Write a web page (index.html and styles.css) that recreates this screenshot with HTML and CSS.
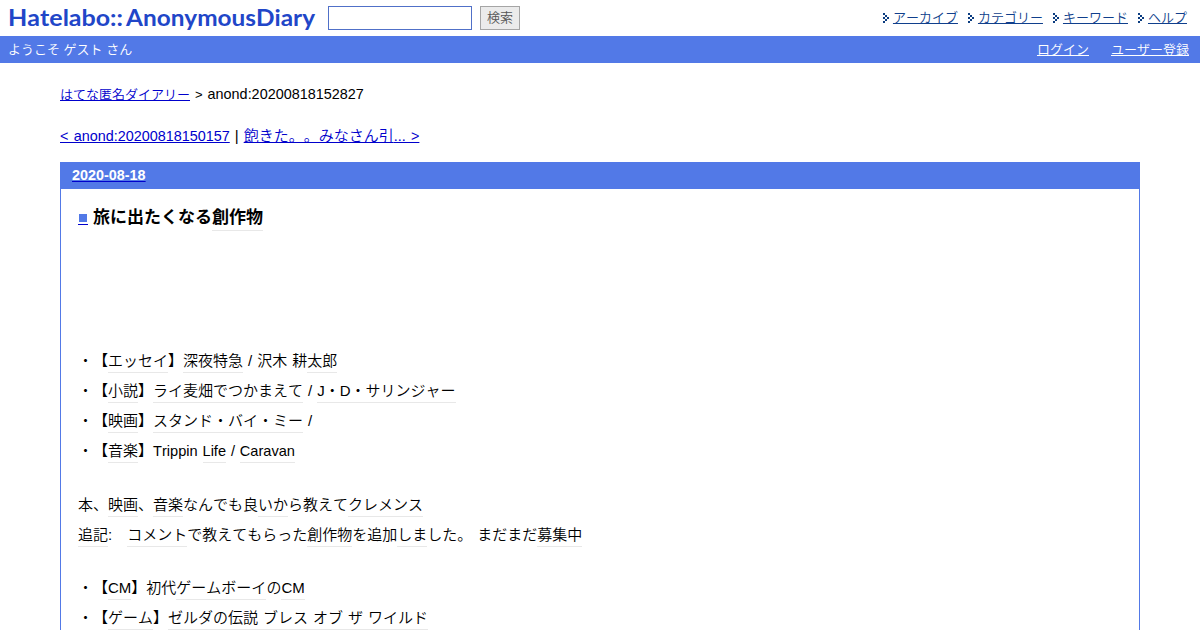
FILE: index.html
```html
<!DOCTYPE html>
<html lang="ja">
<head>
    <meta charset="UTF-8">
    <title>旅に出たくなる創作物</title>
    <link rel="stylesheet" href="styles.css">
</head>
<body>

    <div id="simple-header">
        <a class="logo" href="#">
            <svg width="320" height="36" viewBox="0 0 320 36">
                <text x="8" y="26" textLength="115" lengthAdjust="spacingAndGlyphs">Hatelabo::</text>
                <text x="126" y="26" textLength="189" lengthAdjust="spacingAndGlyphs">AnonymousDiary</text>
            </svg>
        </a>
        <form class="search-form">
            <input type="text" class="search-word">
            <button type="button" class="search-button">検索</button>
        </form>
        <ul class="menu">
            <li><svg class="arrow" width="7" height="10" viewBox="0 0 7 10" shape-rendering="crispEdges"><path d="M0 0h2v2h-2zM2 2h2v2h-2zM4 4h2v2h-2zM2 6h2v2h-2zM0 8h2v2h-2zM0 4h2v2h-2z"/></svg><a href="#">アーカイブ</a></li>
            <li><svg class="arrow" width="7" height="10" viewBox="0 0 7 10" shape-rendering="crispEdges"><path d="M0 0h2v2h-2zM2 2h2v2h-2zM4 4h2v2h-2zM2 6h2v2h-2zM0 8h2v2h-2zM0 4h2v2h-2z"/></svg><a href="#">カテゴリー</a></li>
            <li><svg class="arrow" width="7" height="10" viewBox="0 0 7 10" shape-rendering="crispEdges"><path d="M0 0h2v2h-2zM2 2h2v2h-2zM4 4h2v2h-2zM2 6h2v2h-2zM0 8h2v2h-2zM0 4h2v2h-2z"/></svg><a href="#">キーワード</a></li>
            <li><svg class="arrow" width="7" height="10" viewBox="0 0 7 10" shape-rendering="crispEdges"><path d="M0 0h2v2h-2zM2 2h2v2h-2zM4 4h2v2h-2zM2 6h2v2h-2zM0 8h2v2h-2zM0 4h2v2h-2z"/></svg><a href="#">ヘルプ</a></li>
        </ul>
    </div>

    <div id="banner-sub">
        <span>ようこそ ゲスト さん</span>
        <div class="login">
            <a href="#">ログイン</a>
            <a href="#">ユーザー登録</a>
        </div>
    </div>

    <div id="hatena-body">
        <div class="breadcrumb"><a href="#">はてな匿名ダイアリー</a><span class="gt">&gt;</span><span class="latin">anond:20200818152827</span></div>

        <div class="pager"><a href="#"><span class="latin">&lt; anond:20200818150157</span></a><span class="bar">|</span><a href="#">飽きた。。みなさん引<span class="latin">... &gt;</span></a></div>

        <div class="day">
            <h2><a href="#">2020-08-18</a></h2>
            <div class="section">
                <h3><a class="sanchor" href="#"><span class="square"></span></a>旅に出たくなる<span class="keyword">創作物</span></h3>
                <p class="list">
                    ・【<span class="keyword">エッセイ</span>】<span class="keyword">深夜特急</span> / 沢木 耕<span class="keyword">太郎</span><br>
                    ・【<span class="keyword">小説</span>】<span class="keyword">ライ麦畑でつかまえて</span> / <span class="keyword">J・D・サリンジャー</span><br>
                    ・【<span class="keyword">映画</span>】<span class="keyword">スタンド・バイ・ミー</span> /<br>
                    ・【<span class="keyword">音楽</span>】<span class="latin">Trippin <span class="keyword">Life</span> / <span class="keyword">Caravan</span></span>
                </p>
                <p>
                    本、<span class="keyword">映画</span>、<span class="keyword">音楽</span>なんでも良<span class="keyword">いか</span>ら教えて<span class="keyword">クレメンス</span><br>
                    <span class="keyword">追記</span>:　<span class="keyword">コメント</span>で教えてもらった<span class="keyword">創作物</span>を追加<span class="keyword">しま</span>した。 まだまだ<span class="keyword">募集中</span>
                </p>
                <p>
                    ・【<span class="keyword">CM</span>】初代<span class="keyword">ゲームボーイ</span>の<span class="keyword">CM</span><br>
                    ・【<span class="keyword">ゲーム</span>】<span class="keyword">ゼルダの伝説 ブレス オブ ザ ワイルド</span>
                </p>
            </div>
        </div>
    </div>

</body>
</html>
```
FILE: styles.css
```css
html {
    overflow: hidden;
}

body {
    margin: 0;
    height: 630px;
    overflow: hidden;
    background: #fff;
    color: #000;
    font-family: "Liberation Sans", "Noto Sans CJK JP", sans-serif;
    font-size: 15px;
    font-weight: 350;
    font-kerning: none;
    text-spacing-trim: space-all;
    text-decoration-skip-ink: none;
}

a {
    color: #0000cc;
}

/* ヘッダー */
#simple-header {
    display: flex;
    align-items: center;
    height: 36px;
}

.logo,
.logo svg {
    display: block;
}

.logo text {
    font-family: Lato, sans-serif;
    font-size: 23px;
    font-weight: 700;
    fill: #2146c8;
}

.search-form {
    display: flex;
    gap: 8px;
    margin-left: 8px;
}

.search-word {
    box-sizing: border-box;
    width: 144px;
    height: 24px;
    border: 1px solid #5070c8;
    background: #fff;
}

.search-button {
    width: 40px;
    height: 24px;
    padding: 0;
    border: 1px solid #a5a5a5;
    background: #ebebeb;
    color: #555;
    font: 350 13px/20px "Liberation Sans", "Noto Sans CJK JP", sans-serif;
}

.menu {
    display: flex;
    gap: 10px;
    margin: 0 13px 0 auto;
    padding: 0;
    list-style: none;
    font-size: 13px;
    line-height: 18px;
}

.menu li {
    display: flex;
    align-items: center;
}

.menu a {
    color: #103f8c;
}

.arrow {
    margin-right: 3px;
    fill: #0b3c80;
}

/* ログインバー */
#banner-sub {
    display: flex;
    justify-content: space-between;
    height: 27px;
    padding: 0 11px 0 8px;
    background: #5279e7;
    color: #fff;
    font-size: 13px;
    line-height: 27px;
}

.login {
    display: flex;
    gap: 22px;
}

.login a {
    color: #fff;
}

/* 本文 */
#hatena-body {
    padding: 21px 60px 0;
}

.breadcrumb {
    height: 20px;
    line-height: 20px;
    font-size: 13px;
}

.gt {
    margin: 0 5px;
}

.latin {
    font-size: 14.4px;
}

.pager {
    height: 20px;
    margin-top: 22px;
    line-height: 20px;
    word-spacing: 1.3px;
}

.bar {
    margin: 0 5px;
}

.day {
    margin-top: 16px;
    border: 1px solid #5279e7;
}

.day h2 {
    height: 26px;
    margin: 0;
    padding-left: 11px;
    background: #5279e7;
    font-size: 14.4px;
    line-height: 24px;
}

.day h2 a {
    color: #fff;
    text-decoration-color: #0000cc;
}

.section {
    padding: 0 17px;
}

.section h3 {
    height: 30px;
    margin: 14px 0 0;
    font-size: 17px;
    font-weight: 700;
    line-height: 30px;
}

.sanchor {
    display: inline-block;
    margin-right: 5px;
    border-bottom: 1px solid #0000cc;
    line-height: 0;
    vertical-align: -2px;
}

.square {
    display: block;
    width: 8px;
    height: 8px;
    margin: 0 1px 2px;
    background: #5279e7;
}

.section p {
    margin: 0 0 23.5px;
    line-height: 30px;
    word-spacing: 0.8px;
}

.section p .latin {
    font-size: 14.6px;
}

.section .list {
    margin-top: 113px;
}

.keyword {
    padding-bottom: 3px;
    border-bottom: 1px solid #e8e8e8;
}
```
